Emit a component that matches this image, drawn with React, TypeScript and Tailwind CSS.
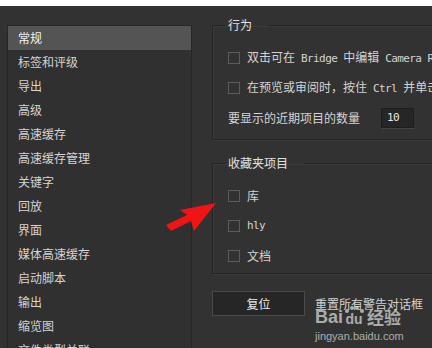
import React from "react";

const cjk = "font-['Noto_Sans_CJK_SC','Noto_Sans',sans-serif]";
const mono = "font-['DejaVu_Sans_Mono','Noto_Sans_CJK_SC',monospace] text-[11px] tracking-[-0.6px]";

const menu = [
  "常规",
  "标签和评级",
  "导出",
  "高级",
  "高速缓存",
  "高速缓存管理",
  "关键字",
  "回放",
  "界面",
  "媒体高速缓存",
  "启动脚本",
  "输出",
  "缩览图",
  "文件类型关联",
];

function Check() {
  return <span className="h-[12px] w-[12px] shrink-0 border border-[#5c5c5c]" />;
}

function Row({ children }: { children: React.ReactNode }) {
  return <div className="flex h-[30px] items-center gap-[7px] whitespace-pre">{children}</div>;
}

function Group({ title, children, className }: { title: string; children: React.ReactNode; className?: string }) {
  return (
    <fieldset
      className={`w-[260px] border border-[#242424] pl-[15px] pr-0 shadow-[inset_1px_1px_0_#3a3a3a,1px_1px_0_#3a3a3a] ${className ?? ""}`}
    >
      <legend className="ml-[-3px] pl-[3px] pr-[16px] text-[12px] leading-[16px] text-[#e2e2e2]">{title}</legend>
      {children}
    </fieldset>
  );
}

export default function App() {
  return (
    <div className={`relative h-[348px] w-[432px] overflow-hidden bg-white ${cjk}`}>
      <div className="h-[6px] bg-white" />
      <div className="flex h-[342px] bg-[#323232] text-[12px] text-[#d4d4d4]">
        {/* sidebar list */}
        <div className="w-[212px] shrink-0 pl-[7px] pt-[19px]">
          <div className="h-full w-[185px] border border-b-0 border-[#262626] bg-[#303030] shadow-[inset_0_1px_0_#3c3c3c]">
            {menu.map((m, i) => (
              <div
                key={m}
                className={`flex h-[24px] items-center pl-[10px] leading-[24px] ${
                  i === 0 ? "bg-[#545454] text-[#f2f2f2]" : ""
                }`}
              >
                {m}
              </div>
            ))}
          </div>
        </div>

        {/* settings */}
        <div className="flex-1 overflow-hidden pt-[11px]">
          <Group title="行为" className="pb-[6px] pt-[10px]">
            <Row>
              <Check />
              <span>
                双击可在<span className={mono}> Bridge </span>中编辑<span className={mono}> Camera Raw </span>设置
              </span>
            </Row>
            <Row>
              <Check />
              <span>
                在预览或审阅时，按住<span className={mono}> Ctrl </span>并单击
              </span>
            </Row>
            <div className="flex h-[30px] items-center whitespace-nowrap">
              <span className="w-[153px]">要显示的近期项目的数量</span>
              <div className="flex h-[20px] w-[33px] items-center border border-[#1e1e1e] bg-[#262626] pl-[5px] shadow-[0_1px_0_#444]">
                <span className={`${mono} text-[#e6e6e6]`}>10</span>
              </div>
            </div>
          </Group>

          <Group title="收藏夹项目" className="mt-[15px] pb-[2px] pt-[10px]">
            <Row>
              <Check />
              <span>库</span>
            </Row>
            <Row>
              <Check />
              <span className={mono}>hly</span>
            </Row>
            <Row>
              <Check />
              <span>文档</span>
            </Row>
          </Group>

          <div className="mt-[17px] flex items-center gap-[10px] whitespace-nowrap">
            <button className="h-[25px] w-[93px] border border-[#4a4a4a] bg-[#262626] text-[12px] text-[#ececec]">
              复位
            </button>
            <span>重置所有警告对话框</span>
          </div>
        </div>
      </div>

      {/* red annotation arrow */}
      <svg className="absolute left-0 top-0" width="432" height="348">
        <polygon
          points="216,203 180,210 187,215 166,225 171,231 191,221 194,231"
          fill="#f01414"
        />
      </svg>

      {/* baidu watermark */}
      <div className="absolute left-[315px] top-[306px] text-white/60">
        <div className="flex items-end font-['Liberation_Sans',sans-serif] text-[18px] font-bold leading-[18px]">
          <span>Bai</span>
          <span className="relative ml-[1px] inline-flex flex-col items-center">
            <svg width="20" height="8" viewBox="0 0 20 8" className="mb-[-2px]">
              <circle cx="3" cy="5" r="2" fill="currentColor" />
              <circle cx="8" cy="2" r="2" fill="currentColor" />
              <circle cx="13" cy="2" r="2" fill="currentColor" />
              <circle cx="18" cy="5" r="2" fill="currentColor" />
            </svg>
            <span className="text-[14px] leading-[14px]">du</span>
          </span>
          <span className={`ml-[3px] text-[17px] leading-[18px] ${cjk}`}>经验</span>
        </div>
        <div className="mt-[4px] font-['Liberation_Sans',sans-serif] text-[11px] leading-[12px]">jingyan.baidu.com</div>
      </div>
    </div>
  );
}
